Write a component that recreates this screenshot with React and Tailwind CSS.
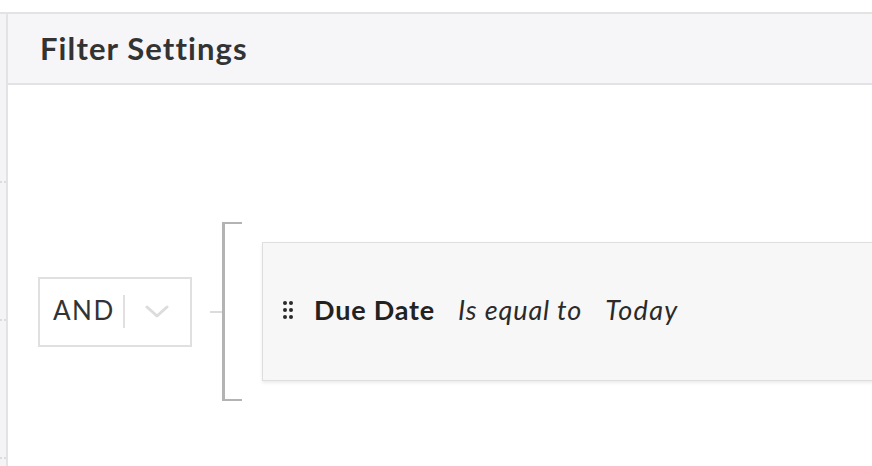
import React from "react";

function Dash() {
  return (
    <div className="flex gap-[2px] h-[2px]">
      <div className="w-[2px] h-[2px] bg-[#dcdcde]" />
      <div className="w-[2px] h-[2px] bg-[#dcdcde]" />
    </div>
  );
}

function DragDots() {
  return (
    <div className="grid grid-cols-2 gap-x-[2px] gap-y-[3px] w-[10px]">
      {Array.from({ length: 6 }).map((_, i) => (
        <div key={i} className="w-[4px] h-[4px] rounded-full bg-[#2a2a2a]" />
      ))}
    </div>
  );
}

export default function App() {
  return (
    <div
      className="w-[872px] h-[466px] bg-white pt-[12px] overflow-hidden"
      style={{ fontFamily: "Lato, 'Noto Sans', sans-serif" }}
    >
      <div className="flex h-[454px] border-t-2 border-[#e3e3e5]">
        <div className="w-[8px] shrink-0 bg-[#f4f4f6] border-r-2 border-[#e3e3e5] flex flex-col pt-[167px] gap-[136px]">
          <Dash />
          <Dash />
          <Dash />
        </div>
        <div className="flex-1 flex flex-col min-w-0 overflow-hidden">
          <div className="h-[71px] shrink-0 bg-[#f6f6f8] border-b-2 border-[#e3e3e5] flex items-center pl-[32px]">
            <h1 className="text-[31px] leading-none font-bold text-[#333333] tracking-[1.1px]">Filter Settings</h1>
          </div>
          <div className="flex items-center pt-[137px] pl-[30px]">
            <div className="w-[154px] h-[70px] shrink-0 border-2 border-[#e0e0e0] bg-white flex items-center pl-[13px]">
              <span className="text-[26px] leading-none text-[#333333] tracking-[1.5px] w-[58px] pb-[3px]">AND</span>
              <div className="w-[2px] h-[33px] bg-[#e0e0e0] ml-[12px]" />
              <svg className="ml-[20px]" width="24" height="14" viewBox="0 0 24 14" fill="none">
                <path d="M2 2 L12 11 L22 2" stroke="#dcdcdc" strokeWidth="3" strokeLinecap="round" strokeLinejoin="round" />
              </svg>
            </div>
            <div className="w-[12px] h-[2px] bg-[#dcdcdc] ml-[18px] shrink-0" />
            <div className="w-[20px] h-[179px] shrink-0 border-l-[3px] border-y-2 border-[#b3b3b3]" />
            <div className="ml-[20px] w-[700px] h-[139px] shrink-0 bg-[#f7f7f7] border border-[#dedede] shadow-[0_2px_3px_rgba(0,0,0,0.08)] flex items-center pl-[20px] pb-[4px]">
              <DragDots />
              <span className="ml-[21px] text-[27px] leading-none font-bold text-[#222222] tracking-[0.8px]">Due Date</span>
              <span className="ml-[23px] text-[27px] leading-none italic text-[#2a2a2a] tracking-[0.9px]">Is equal to</span>
              <span className="ml-[23px] text-[27px] leading-none italic text-[#2a2a2a] tracking-[1.3px]">Today</span>
            </div>
          </div>
        </div>
      </div>
    </div>
  );
}
